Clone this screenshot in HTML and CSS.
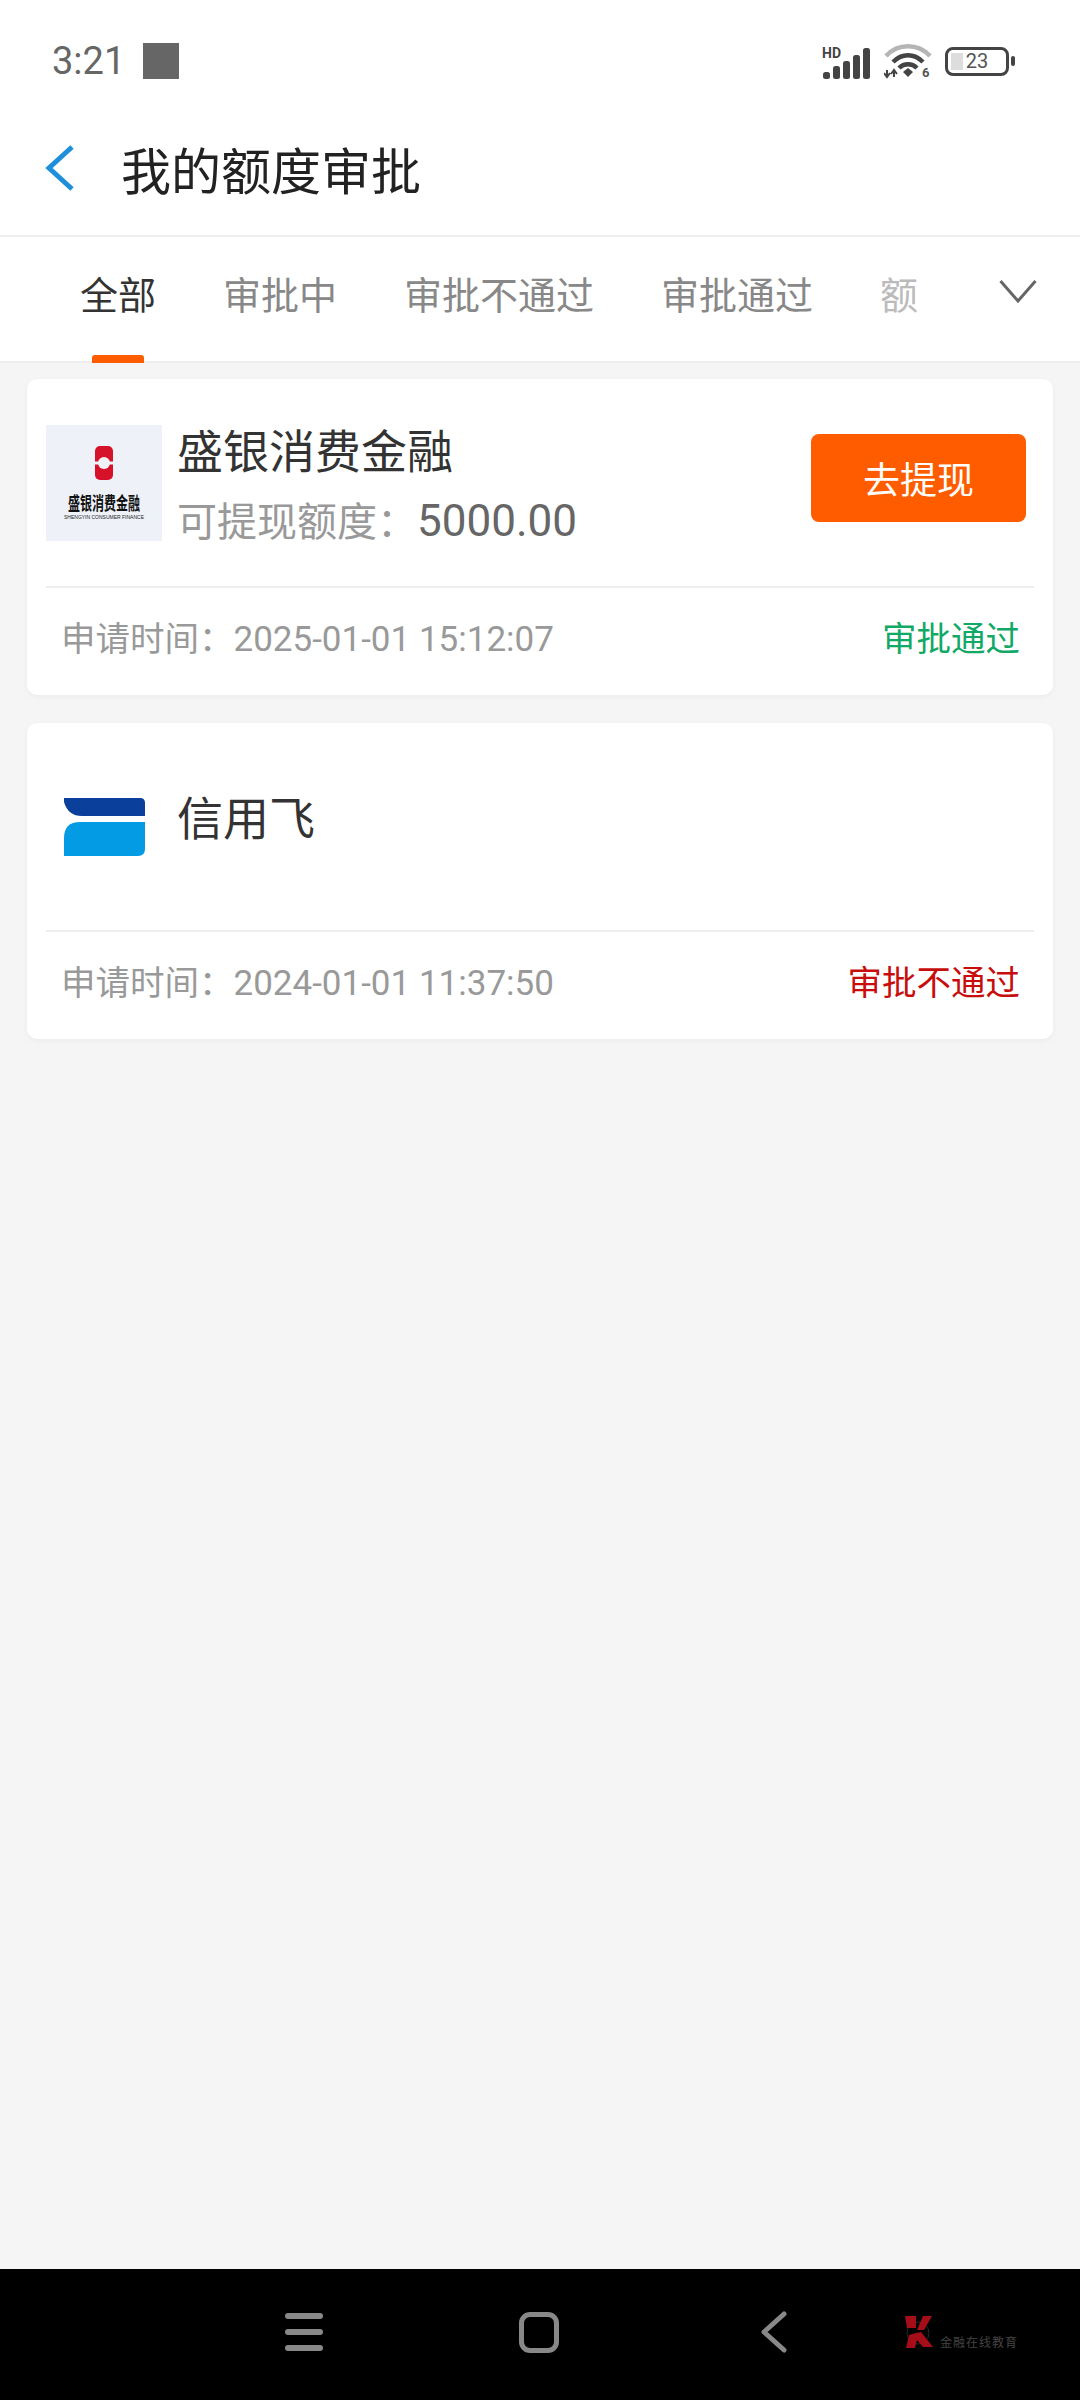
FILE: index.html
```html
<!DOCTYPE html>
<html lang="zh-CN">
<head>
    <meta charset="UTF-8">
    <meta name="viewport" content="width=device-width, initial-scale=1.0">
    <title>我的额度审批</title>
    <link rel="stylesheet" href="styles.css">
</head>
<body>
    <div class="page">
        <div class="status-bar">
            <div class="status-left">
                <span class="clock">3:21</span>
                <span class="notice-box"></span>
            </div>
            <div class="status-right">
                <svg class="icon-signal" width="50" height="35" viewBox="0 -3 50 35">
                    <text x="0" y="11" class="hd-text">HD</text>
                    <rect x="1" y="25" width="7" height="7" rx="2.5" fill="#444"/>
                    <rect x="11" y="19" width="7" height="13" rx="2.5" fill="#444"/>
                    <rect x="21" y="14" width="7" height="18" rx="2.5" fill="#444"/>
                    <rect x="31" y="8" width="7" height="24" rx="2.5" fill="#444"/>
                    <rect x="41" y="1" width="7" height="31" rx="2.5" fill="#444"/>
                </svg>
                <svg class="icon-wifi" width="48" height="39" viewBox="0 0 48 39">
                    <path d="M2 14 C14 1 34 1 46 14" fill="none" stroke="#b5b5b5" stroke-width="4.5"/>
                    <path d="M9 20 C18 11 30 11 39 20" fill="none" stroke="#444" stroke-width="4.5"/>
                    <path d="M15 26 C20 21 28 21 33 26" fill="none" stroke="#444" stroke-width="4.5"/>
                    <path d="M19 30 L24 26 L29 30 L24 35 Z" fill="#444"/>
                    <path d="M3 28 V35 M0 31 L3 35 L6 31 M10 35 V28 M7 32 L10 28 L13 32" fill="none" stroke="#444" stroke-width="2"/>
                    <text x="38" y="35" class="wifi-six">6</text>
                </svg>
                <div class="battery">
                    <span class="battery-body"><span class="battery-fill"></span><span class="battery-num">23</span></span>
                    <span class="battery-nub"></span>
                </div>
            </div>
        </div>

        <header class="title-bar">
            <svg class="back-icon" width="30" height="46" viewBox="0 0 30 46">
                <path d="M27 2 L4 23 L27 44" fill="none" stroke="#1f8fdc" stroke-width="5"/>
            </svg>
            <h1>我的额度审批</h1>
        </header>

        <nav class="tabs">
            <div class="tab-list">
                <span class="tab active">全部</span>
                <span class="tab">审批中</span>
                <span class="tab">审批不通过</span>
                <span class="tab">审批通过</span>
                <span class="tab faded">额</span>
            </div>
            <div class="tab-more">
                <svg width="38" height="24" viewBox="0 0 38 24">
                    <path d="M1.5 2 L19 22 L36.5 2" fill="none" stroke="#666" stroke-width="3"/>
                </svg>
            </div>
        </nav>

        <main class="content">
            <section class="card">
                <div class="card-main">
                    <div class="logo logo-sy">
                        <svg width="18" height="34" viewBox="0 0 18 34">
                            <rect width="18" height="34" rx="5" fill="#d6122b"/>
                            <rect y="15.5" width="18" height="3" fill="#eef2f8"/>
                            <circle cx="9" cy="17" r="6" fill="#eef2f8"/>
                        </svg>
                        <span class="logo-cn">盛银消费金融</span>
                        <span class="logo-en">SHENGYIN CONSUMER FINANCE</span>
                    </div>
                    <div class="info">
                        <div class="name">盛银消费金融</div>
                        <div class="quota">可提现额度：<span class="amount">5000.00</span></div>
                    </div>
                    <button class="withdraw">去提现</button>
                </div>
                <div class="card-foot">
                    <span class="time">申请时间：<span class="num">2025-01-01 15:12:07</span></span>
                    <span class="state pass">审批通过</span>
                </div>
            </section>

            <section class="card">
                <div class="card-main">
                    <div class="logo">
                        <svg width="81" height="58" viewBox="0 0 81 58">
                            <path d="M0 0 H76 Q81 0 81 5 V18 H18 Q4 18 0 4 Z" fill="#0a3f9c"/>
                            <path d="M16 24 H81 V51 Q81 58 74 58 H0 V40 Q0 24 16 24 Z" fill="#049be5"/>
                        </svg>
                    </div>
                    <div class="info single">
                        <div class="name">信用飞</div>
                    </div>
                </div>
                <div class="card-foot">
                    <span class="time">申请时间：<span class="num">2024-01-01 11:37:50</span></span>
                    <span class="state fail">审批不通过</span>
                </div>
            </section>
        </main>

        <footer class="nav-bar">
            <div class="nav-menu"><span></span><span></span><span></span></div>
            <div class="nav-home"></div>
            <svg class="nav-back" width="26" height="42" viewBox="0 0 26 42">
                <path d="M23 3 L3 21 L23 39" fill="none" stroke="#888" stroke-width="5" stroke-linecap="round" stroke-linejoin="round"/>
            </svg>
            <div class="watermark">
                <svg width="30" height="34" viewBox="0 0 30 34">
                    <circle cx="14" cy="18" r="11" fill="none" stroke="#2a2a2a" stroke-width="1"/>
                    <path d="M1 1 H12 V13 H3 Z M19 1 H28 L20 15 H13 Z M12 18 L17 17 L29 32 H19 L13 25 L11 33 H2 L5 20 Z" fill="#a50d18"/>
                </svg>
                <span>金融在线教育</span>
            </div>
        </footer>
    </div>
</body>
</html>
```

FILE: styles.css
```css
* {
    box-sizing: border-box;
}
body {
    margin: 0;
    font-family: "Noto Sans CJK SC", Roboto, sans-serif;
    background-color: #f5f5f5;
}
.page {
    display: flex;
    flex-direction: column;
    height: 2400px;
    overflow: hidden;
}

/* status bar */
.status-bar {
    display: flex;
    justify-content: space-between;
    align-items: center;
    height: 112px;
    padding: 10px 65px 0 52px;
    background-color: white;
}
.status-left {
    display: flex;
    align-items: center;
    gap: 18px;
}
.clock {
    font-family: Roboto, sans-serif;
    font-size: 38px;
    color: #666;
}
.notice-box {
    width: 36px;
    height: 36px;
    background-color: #666;
}
.status-right {
    display: flex;
    align-items: center;
    gap: 12px;
}
.hd-text {
    font-family: Roboto, sans-serif;
    font-size: 14px;
    font-weight: 700;
    fill: #444;
}
.wifi-six {
    font-family: Roboto, sans-serif;
    font-size: 13px;
    font-weight: 700;
    fill: #555;
}
.battery {
    display: flex;
    align-items: center;
    gap: 2px;
    margin-left: 1px;
}
.battery-body {
    position: relative;
    display: flex;
    justify-content: center;
    align-items: center;
    width: 64px;
    height: 29px;
    border: 3px solid #444;
    border-radius: 8px;
}
.battery-fill {
    position: absolute;
    left: 3px;
    top: 3px;
    bottom: 3px;
    width: 12px;
    background-color: #ddd;
}
.battery-num {
    position: relative;
    font-family: Roboto, sans-serif;
    font-size: 20px;
    color: #555;
}
.battery-nub {
    width: 4px;
    height: 10px;
    background-color: #444;
    border-radius: 2px;
}

/* title */
.title-bar {
    display: flex;
    align-items: center;
    height: 125px;
    padding: 0 0 12px 45px;
    background-color: white;
    border-bottom: 2px solid #eeeeee;
}
.title-bar h1 {
    margin: 0 0 0 46px;
    font-size: 50px;
    font-weight: 400;
    color: #222;
}

/* tabs */
.tabs {
    display: flex;
    height: 126px;
    background-color: white;
    border-bottom: 2px solid #eeeeee;
}
.tab-list {
    display: flex;
    gap: 67px;
    width: 950px;
    padding-left: 80px;
    white-space: nowrap;
}
.tab {
    position: relative;
    flex-shrink: 0;
    font-size: 38px;
    line-height: 112px;
    color: #888;
}
.tab.faded {
    color: #bbb;
}
.tab.active {
    color: #333;
}
.tab.active::after {
    content: "";
    position: absolute;
    left: 12px;
    right: 12px;
    bottom: -2px;
    height: 8px;
    background-color: #ff5c00;
    border-radius: 3px 3px 0 0;
}
.tab-more {
    display: flex;
    justify-content: center;
    align-items: center;
    flex: 1;
    padding: 0 0 16px 6px;
    box-shadow: -2px 0 4px rgba(0, 0, 0, 0.006);
}

/* cards */
.content {
    flex: 1;
    padding: 16px 27px 0;
}
.card {
    margin-bottom: 28px;
    padding: 0 19px;
    background-color: white;
    border-radius: 10px;
    box-shadow: 0 2px 6px rgba(0, 0, 0, 0.04);
}
.card-main {
    display: flex;
    align-items: center;
    height: 209px;
    padding-right: 8px;
    border-bottom: 2px solid #eeeeee;
}
.logo {
    display: flex;
    flex-direction: column;
    justify-content: center;
    align-items: center;
    flex-shrink: 0;
    width: 116px;
    height: 116px;
}
.logo-sy {
    justify-content: flex-start;
    padding-top: 21px;
    background-color: #eef2f8;
}
.logo-cn {
    margin-top: 14px;
    font-size: 12px;
    line-height: 16px;
    font-weight: 700;
    color: #111;
    transform: scaleY(1.5);
}
.logo-en {
    margin-top: 4px;
    font-family: "Liberation Sans", sans-serif;
    font-size: 5px;
    line-height: 6px;
    color: #222;
    white-space: nowrap;
}
.info {
    flex: 1;
    margin-left: 15px;
    padding-top: 5px;
}
.info.single {
    padding: 0 0 24px;
}
.name {
    font-size: 46px;
    line-height: 60px;
    color: #333;
}
.quota {
    margin-top: 9px;
    font-size: 40px;
    line-height: 64px;
    color: #999;
}
.amount {
    font-family: Roboto, sans-serif;
    font-size: 44px;
    color: #666;
}
.withdraw {
    width: 215px;
    height: 88px;
    margin-bottom: 10px;
    padding: 0;
    border: none;
    border-radius: 8px;
    font-family: inherit;
    font-size: 37px;
    color: white;
    background-color: #ff5c00;
}
.card-foot {
    display: flex;
    justify-content: space-between;
    align-items: center;
    height: 107px;
    padding: 0 14px 12px 15px;
    font-size: 34.5px;
}
.time {
    color: #999;
}
.num {
    font-family: Roboto, sans-serif;
    font-size: 35px;
}
.state.pass {
    color: #12a866;
}
.state.fail {
    color: #c80d0d;
}

/* bottom navigation */
.nav-bar {
    display: flex;
    align-items: center;
    height: 131px;
    padding: 0 0 5px 285px;
    background-color: black;
}
.nav-menu {
    display: flex;
    flex-direction: column;
    gap: 10px;
    width: 38px;
}
.nav-menu span {
    height: 6px;
    background-color: #888;
    border-radius: 3px;
}
.nav-home {
    width: 40px;
    height: 41px;
    margin-left: 196px;
    border: 5px solid #888;
    border-radius: 11px;
}
.nav-back {
    margin-left: 202px;
}
.watermark {
    display: flex;
    align-items: flex-end;
    gap: 6px;
    margin-left: 117px;
}
.watermark span {
    font-size: 12px;
    line-height: 14px;
    letter-spacing: 1px;
    color: #444;
    white-space: nowrap;
}
```
